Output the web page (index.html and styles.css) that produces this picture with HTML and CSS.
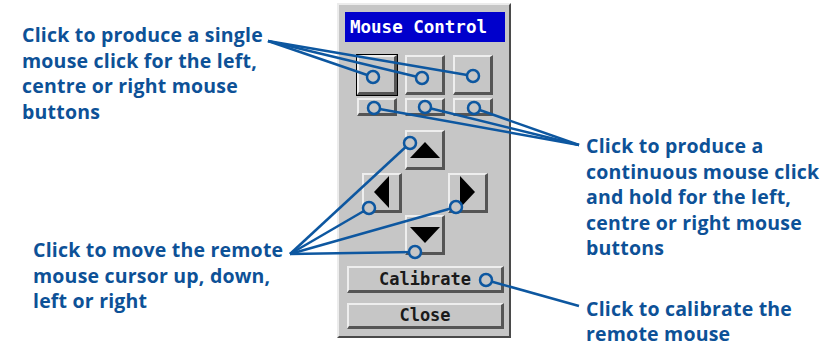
FILE: index.html
```html
<!DOCTYPE html>
<html lang="en">
<head>
    <meta charset="UTF-8">
    <meta name="viewport" content="width=device-width, initial-scale=1.0">
    <link rel="stylesheet" href="styles.css">
    <title>Mouse Control</title>
</head>
<body>
    <div class="figure">
        <div class="panel">
            <div class="title">Mouse Control</div>
            <div class="clicks">
                <button class="btn focused"></button>
                <button class="btn"></button>
                <button class="btn"></button>
                <button class="btn"></button>
                <button class="btn"></button>
                <button class="btn"></button>
            </div>
            <div class="arrows">
                <button class="btn up">
                    <svg width="30" height="16"><polygon points="0,16 15,0 30,16"/></svg>
                </button>
                <button class="btn left">
                    <svg width="15" height="32"><polygon points="15,0 0,16 15,32"/></svg>
                </button>
                <button class="btn right">
                    <svg width="15" height="32"><polygon points="0,0 15,16 0,32"/></svg>
                </button>
                <button class="btn down">
                    <svg width="30" height="16"><polygon points="0,0 30,0 15,16"/></svg>
                </button>
            </div>
            <button class="btn wide calibrate">Calibrate</button>
            <button class="btn wide close">Close</button>
        </div>

        <p class="note note-single">Click to produce a single<br>mouse click for the left,<br>centre or right mouse<br>buttons</p>
        <p class="note note-hold">Click to produce a<br>continuous mouse click<br>and hold for the left,<br>centre or right mouse<br>buttons</p>
        <p class="note note-move">Click to move the remote<br>mouse cursor up, down,<br>left or right</p>
        <p class="note note-calib">Click to calibrate the<br>remote mouse</p>

        <!-- callout lines -->
        <svg class="callouts" width="831" height="346">
            <g class="leader">
                <line x1="268" y1="41" x2="373" y2="77"/>
                <line x1="268" y1="41" x2="422" y2="78"/>
                <line x1="268" y1="41" x2="473" y2="76"/>

                <line x1="579" y1="145" x2="374" y2="108"/>
                <line x1="579" y1="145" x2="425" y2="107"/>
                <line x1="579" y1="145" x2="474" y2="108"/>

                <line x1="290" y1="254" x2="410" y2="143"/>
                <line x1="290" y1="254" x2="369" y2="208"/>
                <line x1="290" y1="254" x2="456" y2="207"/>
                <line x1="290" y1="254" x2="415" y2="252"/>

                <line x1="579" y1="306" x2="486" y2="280"/>
            </g>
            <g class="dot">
                <circle cx="373" cy="77" r="6"/>
                <circle cx="422" cy="78" r="6"/>
                <circle cx="473" cy="76" r="6"/>
                <circle cx="374" cy="108" r="6"/>
                <circle cx="425" cy="107" r="6"/>
                <circle cx="474" cy="108" r="6"/>
                <circle cx="410" cy="143" r="6"/>
                <circle cx="369" cy="208" r="6"/>
                <circle cx="456" cy="207" r="6"/>
                <circle cx="415" cy="252" r="6"/>
                <circle cx="486" cy="280" r="6"/>
            </g>
        </svg>
    </div>
</body>
</html>
```

FILE: styles.css
```css
body {
    margin: 0;
    background: #fff;
}

.figure {
    position: relative;
    width: 831px;
    height: 346px;
    overflow: hidden;
}

.panel {
    box-sizing: border-box;
    width: 174px;
    height: 335px;
    margin: 3px 0 0 337px;
    padding: 7px 6px;
    display: flex;
    flex-direction: column;
    align-items: flex-start;
    background: #c6c6c6;
    border: 2px solid;
    border-color: #ececec #4a4a4a #4a4a4a #ececec;
}

.title {
    box-sizing: border-box;
    width: 160px;
    height: 31px;
    padding: 4px 0 0 5px;
    background: #0000cc;
    color: #fff;
    font-family: "DejaVu Sans Mono", monospace;
    font-weight: bold;
    font-size: 17.5px;
    line-height: 22px;
}

.btn {
    box-sizing: border-box;
    margin: 0;
    padding: 0;
    display: flex;
    align-items: center;
    justify-content: center;
    background: #c6c6c6;
    border-style: solid;
    border-width: 2px 3px 3px 2px;
    border-color: #eeeeee #555555 #555555 #eeeeee;
    font-family: "DejaVu Sans Mono", monospace;
    font-weight: bold;
    font-size: 17px;
    color: #1a1a1a;
}

.btn svg {
    fill: #000;
}

.clicks {
    margin: 13px 0 0 12px;
    display: grid;
    grid-template-columns: repeat(3, 40px);
    grid-template-rows: 40px 18px;
    column-gap: 8px;
    row-gap: 3px;
}

.focused {
    outline: 1px solid #000;
}

.arrows {
    margin: 14px 0 0 17px;
    display: grid;
    grid-template-columns: repeat(3, 40px);
    grid-template-rows: repeat(3, 40px);
    gap: 2.5px 3px;
}

.up { grid-area: 1 / 2; }
.left { grid-area: 2 / 1; }
.right { grid-area: 2 / 3; }
.down { grid-area: 3 / 2; }

.wide {
    width: 157px;
    height: 27px;
    margin-left: 2px;
}

.calibrate {
    margin-top: 11px;
}

.close {
    margin-top: 10px;
}

.note {
    position: absolute;
    margin: 0;
    font-family: "Open Sans", sans-serif;
    font-weight: bold;
    font-size: 19.5px;
    letter-spacing: 0.2px;
    line-height: 25.5px;
    color: #0d5197;
    white-space: nowrap;
}

.note-single { left: 22px; top: 22px; }
.note-hold { left: 586px; top: 133px; }
.note-move { left: 33px; top: 237px; }
.note-calib { left: 586px; top: 296px; line-height: 25px; }

.callouts {
    position: absolute;
    top: 0;
    left: 0;
    pointer-events: none;
}

.leader line {
    stroke: #0d57a0;
    stroke-width: 2.5;
}

.dot circle {
    fill: #c6c6c6;
    stroke: #0d57a0;
    stroke-width: 2.5;
}
```
